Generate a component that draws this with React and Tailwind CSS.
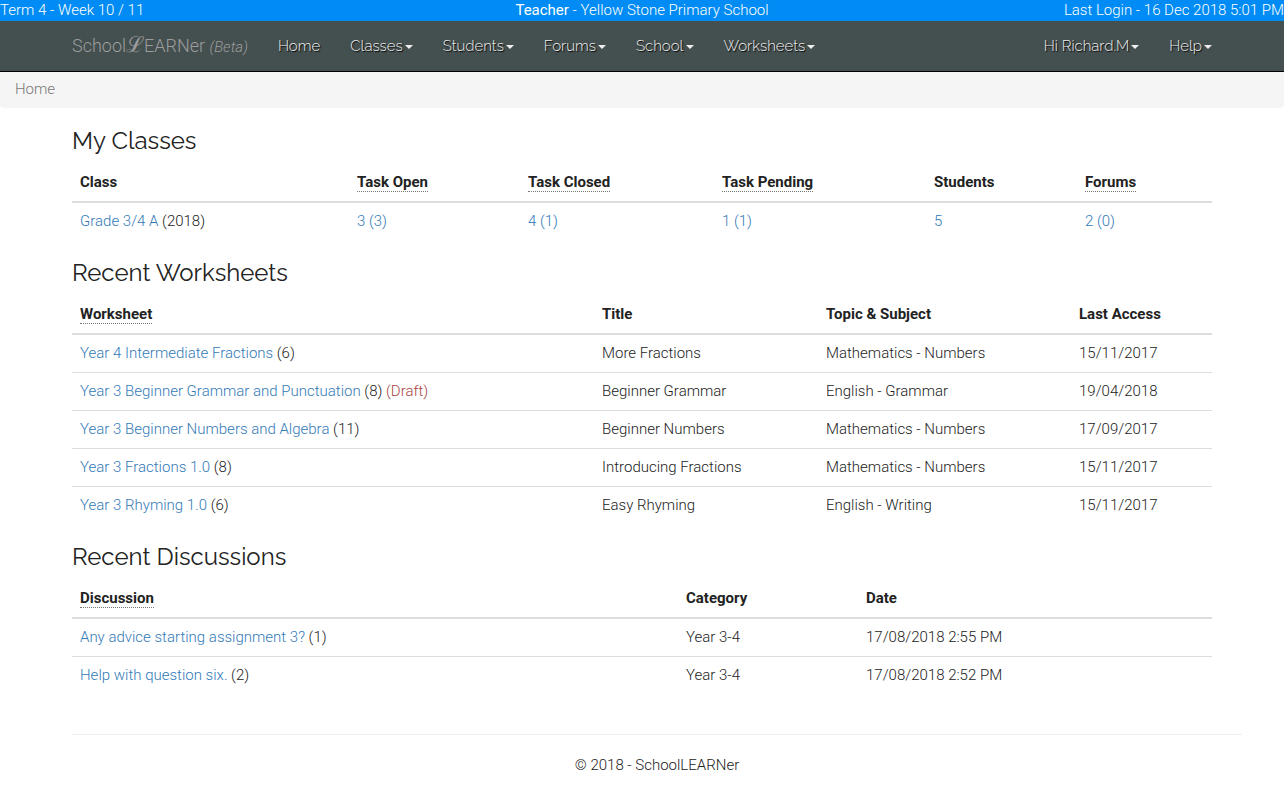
import React from 'react';

const navItems = [
  { label: 'Home', menu: false },
  { label: 'Classes', menu: true },
  { label: 'Students', menu: true },
  { label: 'Forums', menu: true },
  { label: 'School', menu: true },
  { label: 'Worksheets', menu: true }
];

const userItems = [
  { label: 'Hi Richard.M', menu: true },
  { label: 'Help', menu: true }
];

const classes = [
  { name: 'Grade 3/4 A', year: 2018, open: '3 (3)', closed: '4 (1)', pending: '1 (1)', students: '5', forums: '2 (0)' }
];

const worksheets = [
  { name: 'Year 4 Intermediate Fractions', count: 6, title: 'More Fractions', topic: 'Mathematics - Numbers', date: '15/11/2017' },
  { name: 'Year 3 Beginner Grammar and Punctuation', count: 8, draft: true, title: 'Beginner Grammar', topic: 'English - Grammar', date: '19/04/2018' },
  { name: 'Year 3 Beginner Numbers and Algebra', count: 11, title: 'Beginner Numbers', topic: 'Mathematics - Numbers', date: '17/09/2017' },
  { name: 'Year 3 Fractions 1.0', count: 8, title: 'Introducing Fractions', topic: 'Mathematics - Numbers', date: '15/11/2017' },
  { name: 'Year 3 Rhyming 1.0', count: 6, title: 'Easy Rhyming', topic: 'English - Writing', date: '15/11/2017' }
];

const discussions = [
  { name: 'Any advice starting assignment 3?', count: 1, category: 'Year 3-4', date: '17/08/2018 2:55 PM' },
  { name: 'Help with question six.', count: 2, category: 'Year 3-4', date: '17/08/2018 2:52 PM' }
];

const NavItem = ({ label, menu }) => {
  const style =
    "flex items-center gap-0.5 px-[15px] h-[50px] font-['Raleway','Open_Sans',sans-serif] font-light text-[15px] text-[#eee] whitespace-nowrap [text-shadow:1px_1px_1px_#000] hover:text-white";

  if (!menu) {
    return (
      <a href="#" className={style}>
        {label}
      </a>
    );
  }
  return (
    <button type="button" className={style}>
      {label}
      <span className="mt-0.5 border-x-4 border-t-4 border-x-transparent border-t-[#eee]"></span>
    </button>
  );
};

const Link = ({ children }) => (
  <a href="#" className="text-[#337ab7] hover:underline">
    {children}
  </a>
);

const Th = ({ children, className = '', hint }) => (
  <th scope="col" className={`px-2 pt-[9px] pb-2 text-left font-bold ${className}`}>
    {hint ? (
      <abbr title={hint} className="no-underline border-b border-dotted border-[#777] cursor-help">
        {children}
      </abbr>
    ) : (
      children
    )}
  </th>
);

const Section = ({ title, head, children }) => (
  <section>
    <h2 className="mt-5 mb-[9px] font-['Raleway','Open_Sans',sans-serif] font-normal text-2xl leading-[26px]">
      {title}
    </h2>
    <table className="w-full mb-5 table-fixed border-collapse">
      <thead className="border-b-2 border-[#ddd]">
        <tr>{head}</tr>
      </thead>
      <tbody className="divide-y divide-[#ddd] [&_td]:p-2">{children}</tbody>
    </table>
  </section>
);

const App = () => {
  return (
    <div className="font-['Roboto',sans-serif] font-light text-[15px] leading-[21px] text-[#222] bg-white">
      <div className="grid grid-cols-3 bg-[#008cf4] text-white">
        <div>Term 4 - Week 10 / 11</div>
        <div className="text-center">
          <strong>Teacher</strong> - Yellow Stone Primary School
        </div>
        <div className="text-right">Last Login - 16 Dec 2018 5:01 PM</div>
      </div>

      <header className="bg-[#444f4f] border-b border-black">
        <div className="max-w-[1170px] mx-auto flex">
          <a href="#" className="flex items-center h-[50px] px-[15px] text-lg text-[#9d9d9d] whitespace-nowrap">
            <span>
              School<span className="font-['DejaVu_Serif','DejaVu_Sans',serif] text-[22px] leading-none">ℒ</span>EARNer{' '}
              <em className="text-[15px]">(Beta)</em>
            </span>
          </a>
          <nav className="flex flex-1 justify-between">
            <div className="flex">
              {navItems.map((item) => (
                <NavItem key={item.label} {...item} />
              ))}
            </div>
            <div className="flex">
              {userItems.map((item) => (
                <NavItem key={item.label} {...item} />
              ))}
            </div>
          </nav>
        </div>
      </header>

      <div className="h-9 px-[15px] py-[7px] bg-[#f5f5f5] rounded-b text-[#777]">Home</div>

      <main className="max-w-[1170px] mx-auto px-[15px]">
        <Section
          title="My Classes"
          head={
            <>
              <Th>Class</Th>
              <Th className="w-[171px]" hint="Open tasks">Task Open</Th>
              <Th className="w-[194px]" hint="Closed tasks">Task Closed</Th>
              <Th className="w-[212px]" hint="Pending tasks">Task Pending</Th>
              <Th className="w-[151px]">Students</Th>
              <Th className="w-[135px]" hint="Forum posts">Forums</Th>
            </>
          }
        >
          {classes.map((item) => (
            <tr key={item.name}>
              <td>
                <Link>{item.name}</Link> ({item.year})
              </td>
              <td><Link>{item.open}</Link></td>
              <td><Link>{item.closed}</Link></td>
              <td><Link>{item.pending}</Link></td>
              <td><Link>{item.students}</Link></td>
              <td><Link>{item.forums}</Link></td>
            </tr>
          ))}
        </Section>

        <Section
          title="Recent Worksheets"
          head={
            <>
              <Th hint="Number of questions">Worksheet</Th>
              <Th className="w-[224px]">Title</Th>
              <Th className="w-[253px]">Topic &amp; Subject</Th>
              <Th className="w-[141px]">Last Access</Th>
            </>
          }
        >
          {worksheets.map((item) => (
            <tr key={item.name}>
              <td>
                <Link>{item.name}</Link> ({item.count})
                {item.draft && <span className="text-[#a94442]"> (Draft)</span>}
              </td>
              <td>{item.title}</td>
              <td>{item.topic}</td>
              <td>{item.date}</td>
            </tr>
          ))}
        </Section>

        <Section
          title="Recent Discussions"
          head={
            <>
              <Th hint="Number of replies">Discussion</Th>
              <Th className="w-[180px]">Category</Th>
              <Th className="w-[354px]">Date</Th>
            </>
          }
        >
          {discussions.map((item) => (
            <tr key={item.name}>
              <td>
                <Link>{item.name}</Link> ({item.count})
              </td>
              <td>{item.category}</td>
              <td>{item.date}</td>
            </tr>
          ))}
        </Section>

        <footer className="-mr-[30px] mt-10 py-5 border-t border-[#eee] text-center">
          &copy; 2018 - SchoolLEARNer
        </footer>
      </main>
    </div>
  );
};

export default App;
